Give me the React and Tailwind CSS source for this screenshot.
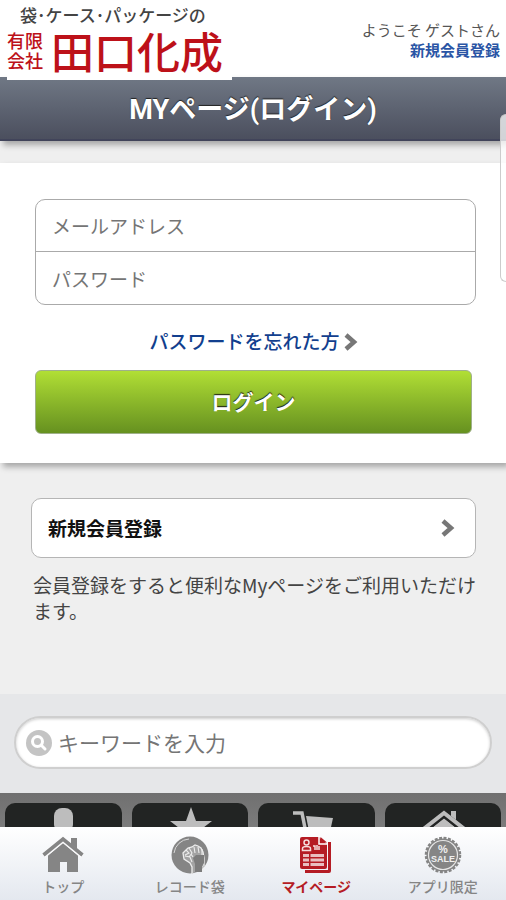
import React from "react";

function Chevron() {
  return (
    <svg width="14" height="18" viewBox="0 0 14 18" fill="none" stroke="#777" strokeWidth="4.500" aria-hidden="true">
      <path d="M2 2 L10 9 L2 16" />
    </svg>
  );
}

function HomeIcon() {
  return (
    <svg width="42" height="38" viewBox="0 0 42 38" fill="#858585" aria-hidden="true">
      <path d="M21 7 36 19.500V36H25V26h-7v10H6V19.500z" />
      <path d="M1.500 19.500 21 3.500l19.500 16" fill="none" stroke="#fafafb" strokeWidth="5.500" />
      <path d="M29 2h6v11l-6-5z" />
      <path d="M1.500 19 21 3l19.500 16" fill="none" stroke="#858585" strokeWidth="3.600" />
    </svg>
  );
}

function RecordIcon() {
  return (
    <svg width="38" height="38" viewBox="0 0 38 38" aria-hidden="true">
      <circle cx="19" cy="19" r="18.500" fill="#858585" />
      <path d="M3 17A16 16 0 0 1 18 3" fill="none" stroke="#d8d8d8" strokeWidth="1" />
      <path
        d="M21 38v-7l-2-4-6-4-1-6 3-3 2-2 4-1 3-2 3 1 3 2 2 4 1 6v8"
        fill="#a3a3a3"
        stroke="#ededed"
        strokeWidth="1.300"
      />
      <path
        d="m15 14 3 3-4 2M18 12l3 5-3 4M23 11l1 6M27 11l1 6M31 13v6M14 20l5 1 2 5M20 18l2 3"
        fill="none"
        stroke="#ededed"
        strokeWidth="1.100"
      />
      <path d="M22 22l3-3h8v8l-2 3v6h-7v-8z" fill="#7c7c7c" />
      <path d="M32 30v6" stroke="#ededed" strokeWidth="1" />
    </svg>
  );
}

function MyPageIcon() {
  return (
    <svg width="34" height="38" viewBox="0 0 34 38" aria-hidden="true">
      <path d="M6 34v3h24q2 0 2-2V6h-3v28z" fill="#b51c24" />
      <path d="M3 1h17l8 7v23q0 2-2 2H3q-2 0-2-2V3q0-2 2-2z" fill="#b51c24" />
      <path d="M20 0v8h8" fill="none" stroke="#fff" strokeWidth="1.500" />
      <path d="M21.500 1 28 6.500h-6.500z" fill="#b51c24" />
      <g fill="none" stroke="#f5dddd" strokeWidth="1.500">
        <circle cx="7.500" cy="6.500" r="2.500" />
        <path d="M3.500 14.500v-2q0-2 4-2t4 2v2z" />
        <path d="M14 10h2v4M18 9v5M20 10v4" />
      </g>
      <g fill="#e9bfc1">
        <path d="M4 18h6v3H4zM11.500 18H25v3H11.500zM4 22.500h6v3H4zM11.500 22.500H25v3H11.500zM4 27h6v3H4zM11.500 27H25v3H11.500z" />
      </g>
    </svg>
  );
}

function SaleIcon() {
  return (
    <svg width="38" height="38" viewBox="0 0 38 38" aria-hidden="true">
      <circle cx="19" cy="19" r="16.500" fill="#858585" />
      <circle cx="19" cy="19" r="17" fill="none" stroke="#858585" strokeWidth="2.500" strokeDasharray="3 1.450" />
      <circle cx="19" cy="19" r="14.500" fill="none" stroke="#e6e6e6" strokeWidth="1.200" />
      <g fill="#f0f0f0" fontFamily="Liberation Sans, sans-serif" fontWeight="700" textAnchor="middle">
        <text x="19" y="17" fontSize="11">%</text>
        <text x="19" y="26" fontSize="9">SALE</text>
      </g>
    </svg>
  );
}

function SearchBadge() {
  return (
    <svg width="26" height="26" viewBox="0 0 26 26" className="shrink-0" aria-hidden="true">
      <circle cx="13" cy="13" r="13" fill="#c4c4c4" />
      <circle cx="11.500" cy="11.500" r="5" fill="none" stroke="#fff" strokeWidth="3" />
      <path d="m15 15 4 4" stroke="#fff" strokeWidth="3" strokeLinecap="round" />
    </svg>
  );
}

const tiles = [
  {
    label: "会員",
    art: (
      <>
        <rect x="21" y="5" width="19" height="24" rx="8" />
        <path d="M10 50q0-20 20-20t20 20z" />
      </>
    ),
  },
  {
    label: "お気に入り",
    art: <path d="m31 4 5 14h16L39 28l5 16-13-10-13 10 5-16-13-10h16z" />,
  },
  {
    label: "カート",
    art: (
      <>
        <path d="M7 10h9l6 30h24" fill="none" stroke="currentColor" strokeWidth="3.500" />
        <path d="M20 13l27 2-4 18H24z" />
      </>
    ),
  },
  {
    label: "ホーム",
    art: (
      <>
        <path d="M38 8h5v13l-5-4z" />
        <path d="M15 28 31 15l16 13v18H15z" />
        <path d="M8 29 31 11l23 18" fill="none" stroke="#222423" strokeWidth="7" />
        <path d="M38 8h5v9l-5-4z" />
        <path d="M8 28 31 10l23 18" fill="none" stroke="currentColor" strokeWidth="4" />
      </>
    ),
  },
];

const tabs = [
  { label: "トップ", Icon: HomeIcon },
  { label: "レコード袋", Icon: RecordIcon },
  { label: "マイページ", Icon: MyPageIcon, active: true },
  { label: "アプリ限定", Icon: SaleIcon },
];

function Header() {
  return (
    <header className="flex h-[77px] shrink-0 items-start justify-between bg-white pl-[7px] pr-1.5">
      <a href="#top" className="relative flex h-20 w-[225px] flex-col bg-white pt-1">
        <span className="pl-[13px] text-[17px] leading-[22px] font-medium whitespace-nowrap text-[#444]">
          袋･ケース･パッケージの
        </span>
        <span className="flex items-center gap-1.5 text-[#bd1119]">
          <span className="w-[38px] text-[18px] leading-5 font-medium">有限会社</span>
          <span className="text-[43px] leading-[48px] font-medium whitespace-nowrap">田口化成</span>
        </span>
      </a>
      <div className="pt-5 text-right text-[15px] leading-5 whitespace-nowrap">
        <p className="text-[#555]">ようこそ ゲストさん</p>
        <a href="#register" className="block font-bold text-[#2a55a5]">新規会員登録</a>
      </div>
    </header>
  );
}

function LoginForm() {
  return (
    <form
      className="mt-[22px] bg-white pt-9 pr-[30px] pb-[29px] pl-[35px] shadow-[3px_4px_6px_rgba(0,0,0,0.3)]"
      onSubmit={(e) => e.preventDefault()}
    >
      <div className="overflow-hidden rounded-[10px] border border-[#aaa]">
        <input
          type="email"
          aria-label="メールアドレス"
          placeholder="メールアドレス"
          className="block h-[52px] w-full border-b border-[#aaa] px-4 text-[19px] outline-none placeholder:text-[#757575]"
        />
        <input
          type="password"
          aria-label="パスワード"
          placeholder="パスワード"
          className="block h-[52px] w-full px-4 text-[19px] outline-none placeholder:text-[#757575]"
        />
      </div>
      <a href="#forgot" className="flex h-[65px] items-center justify-center gap-1 pt-2 pr-1 text-[19px] font-medium text-[#123f8e]">
        パスワードを忘れた方
        <Chevron />
      </a>
      <div className="pr-1">
        <button
          type="submit"
          className="block h-16 w-full rounded-md border border-[#9fb08a] bg-linear-to-b from-[#b1df35] to-[#669120] text-[21px] font-bold text-white [text-shadow:0_-1px_1px_#111]"
        >
          ログイン
        </button>
      </div>
    </form>
  );
}

export default function App() {
  return (
    <div className="flex h-screen flex-col overflow-hidden bg-[#efefef] font-['Noto_Sans_CJK_JP','Noto_Sans',sans-serif]">
      <div className="relative flex min-h-0 flex-1 flex-col overflow-hidden">
        <Header />
        <h1 className="flex h-16 shrink-0 items-center justify-center border-b-2 border-[#41445a] bg-linear-to-b from-[#707885] to-[#4b4f5e] pt-1 font-['Roboto','Noto_Sans_CJK_JP',sans-serif] text-[27px] font-bold text-white shadow-[3px_4px_6px_rgba(0,0,0,0.3)] [text-shadow:0_-1px_1px_#222]">
          MYページ(ログイン)
        </h1>
        <main className="shrink-0">
          <LoginForm />
          <section className="h-[231px] pt-[35px] pr-5 pl-[31px]">
            <a
              href="#register"
              className="mr-2.5 flex h-[60px] items-center justify-between rounded-[10px] border border-[#b5b5b5] bg-white pr-5 pl-4 text-[19px] font-bold text-[#111]"
            >
              新規会員登録
              <Chevron />
            </a>
            <p className="pt-3.5 pl-0.5 text-[19px] leading-[26px] text-[#444]">
              会員登録をすると便利なMyページをご利用いただけます。
            </p>
          </section>
        </main>
        <div className="shrink-0 bg-[#e6e7e9] px-3.5 pt-[22px] pb-6">
          <label className="flex h-[53px] items-center gap-1.5 rounded-full border-2 border-[#cfcfcf] bg-white pr-4 pl-[10px] shadow-[inset_0_1px_3px_rgba(0,0,0,0.2)]">
            <SearchBadge />
            <input
              type="search"
              aria-label="キーワードを入力"
              placeholder="キーワードを入力"
              className="min-w-0 flex-1 bg-transparent text-[21px] outline-none placeholder:text-[#757575]"
            />
          </label>
        </div>
        <div className="grid shrink-0 grid-cols-4 bg-linear-to-b from-[#707070] to-[#909090] pt-2.5">
          {tiles.map((tile) => (
            <a
              key={tile.label}
              href="#menu"
              aria-label={tile.label}
              className="mx-[5px] flex h-20 justify-center rounded-[10px] bg-[#222423] text-[#bdbdbd]"
            >
              <svg width="60" height="60" viewBox="0 0 60 60" fill="currentColor" aria-hidden="true">
                {tile.art}
              </svg>
            </a>
          ))}
        </div>
        <div className="absolute top-[114px] right-0 h-[168px] w-1.5 rounded-l-md border border-r-0 border-[#ccc] bg-white/75" />
      </div>
      <nav className="grid h-[73px] shrink-0 grid-cols-4 bg-linear-to-b from-white to-[#e4e8ef]">
        {tabs.map(({ label, Icon, active }) => (
          <a
            key={label}
            href="#tab"
            className={`flex flex-col items-center pt-[9px] text-[14px] leading-5 ${active ? "font-bold text-[#b51c24]" : "font-medium text-[#858585]"}`}
          >
            <Icon />
            <span className="pt-0.5">{label}</span>
          </a>
        ))}
      </nav>
    </div>
  );
}
